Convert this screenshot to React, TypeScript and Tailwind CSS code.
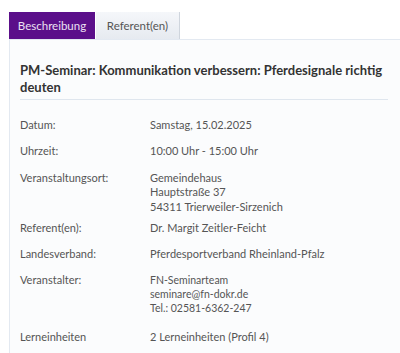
const rows: { label: string; lines: string[]; mt: string; small?: boolean; lh?: string }[] = [
  { label: "Datum:", lines: ["Samstag, 15.02.2025"], mt: "mt-[18px]" },
  { label: "Uhrzeit:", lines: ["10:00 Uhr - 15:00 Uhr"], mt: "mt-[12px]" },
  {
    label: "Veranstaltungsort:",
    lines: ["Gemeindehaus", "Hauptstraße 37", "54311 Trierweiler-Sirzenich"],
    mt: "mt-[12.5px]",
    lh: "leading-[14.5px]",
  },
  { label: "Referent(en):", lines: ["Dr. Margit Zeitler-Feicht"], mt: "mt-[6.5px]" },
  { label: "Landesverband:", lines: ["Pferdesportverband Rheinland-Pfalz"], mt: "mt-[12.7px]" },
  {
    label: "Veranstalter:",
    lines: ["FN-Seminarteam", "seminare@fn-dokr.de", "Tel.: 02581-6362-247"],
    mt: "mt-[12px]",
    small: true,
  },
  { label: "Lerneinheiten", lines: ["2 Lerneinheiten (Profil 4)"], mt: "mt-[15px]" },
];

export default function App() {
  return (
    <div className="w-[400px] h-[353px] overflow-hidden bg-white pt-[12px] pl-[9px] font-['Lato',sans-serif]">
      <div className="flex h-[27px]">
        <div className="w-[86px] bg-[#5b0f8a] text-[#ebe0f2] text-[11.5px] flex items-center justify-center">
          Beschreibung
        </div>
        <div className="w-[84px] ml-[1px] bg-gradient-to-b from-[#f5f7fa] to-[#e6eaf0] border-r border-[#cfd5dd] text-[#555] text-[11.5px] flex items-center justify-center">
          Referent(en)
        </div>
      </div>
      <div className="border-l border-t border-[#e3e9f1] bg-[#fbfcfd] pl-[10px] pr-[12px] pt-[22px] h-[400px]">
        <h2 className="text-[13px] font-bold leading-[17px] text-[#333]">
          PM-Seminar: Kommunikation verbessern: Pferdesignale richtig deuten
        </h2>
        <div className="mt-[3px] border-t border-[#dfe6ee]" />
        {rows.map((r) => (
          <div key={r.label} className={`flex text-[11px] text-[#555] ${r.mt}`}>
            <div className="w-[130px] shrink-0 leading-[14px]">{r.label}</div>
            <div className={r.small ? "text-[10.5px] leading-[14px]" : r.lh ?? "leading-[14px]"}>
              {r.lines.map((l) => (
                <div key={l}>{l}</div>
              ))}
            </div>
          </div>
        ))}
      </div>
    </div>
  );
}
